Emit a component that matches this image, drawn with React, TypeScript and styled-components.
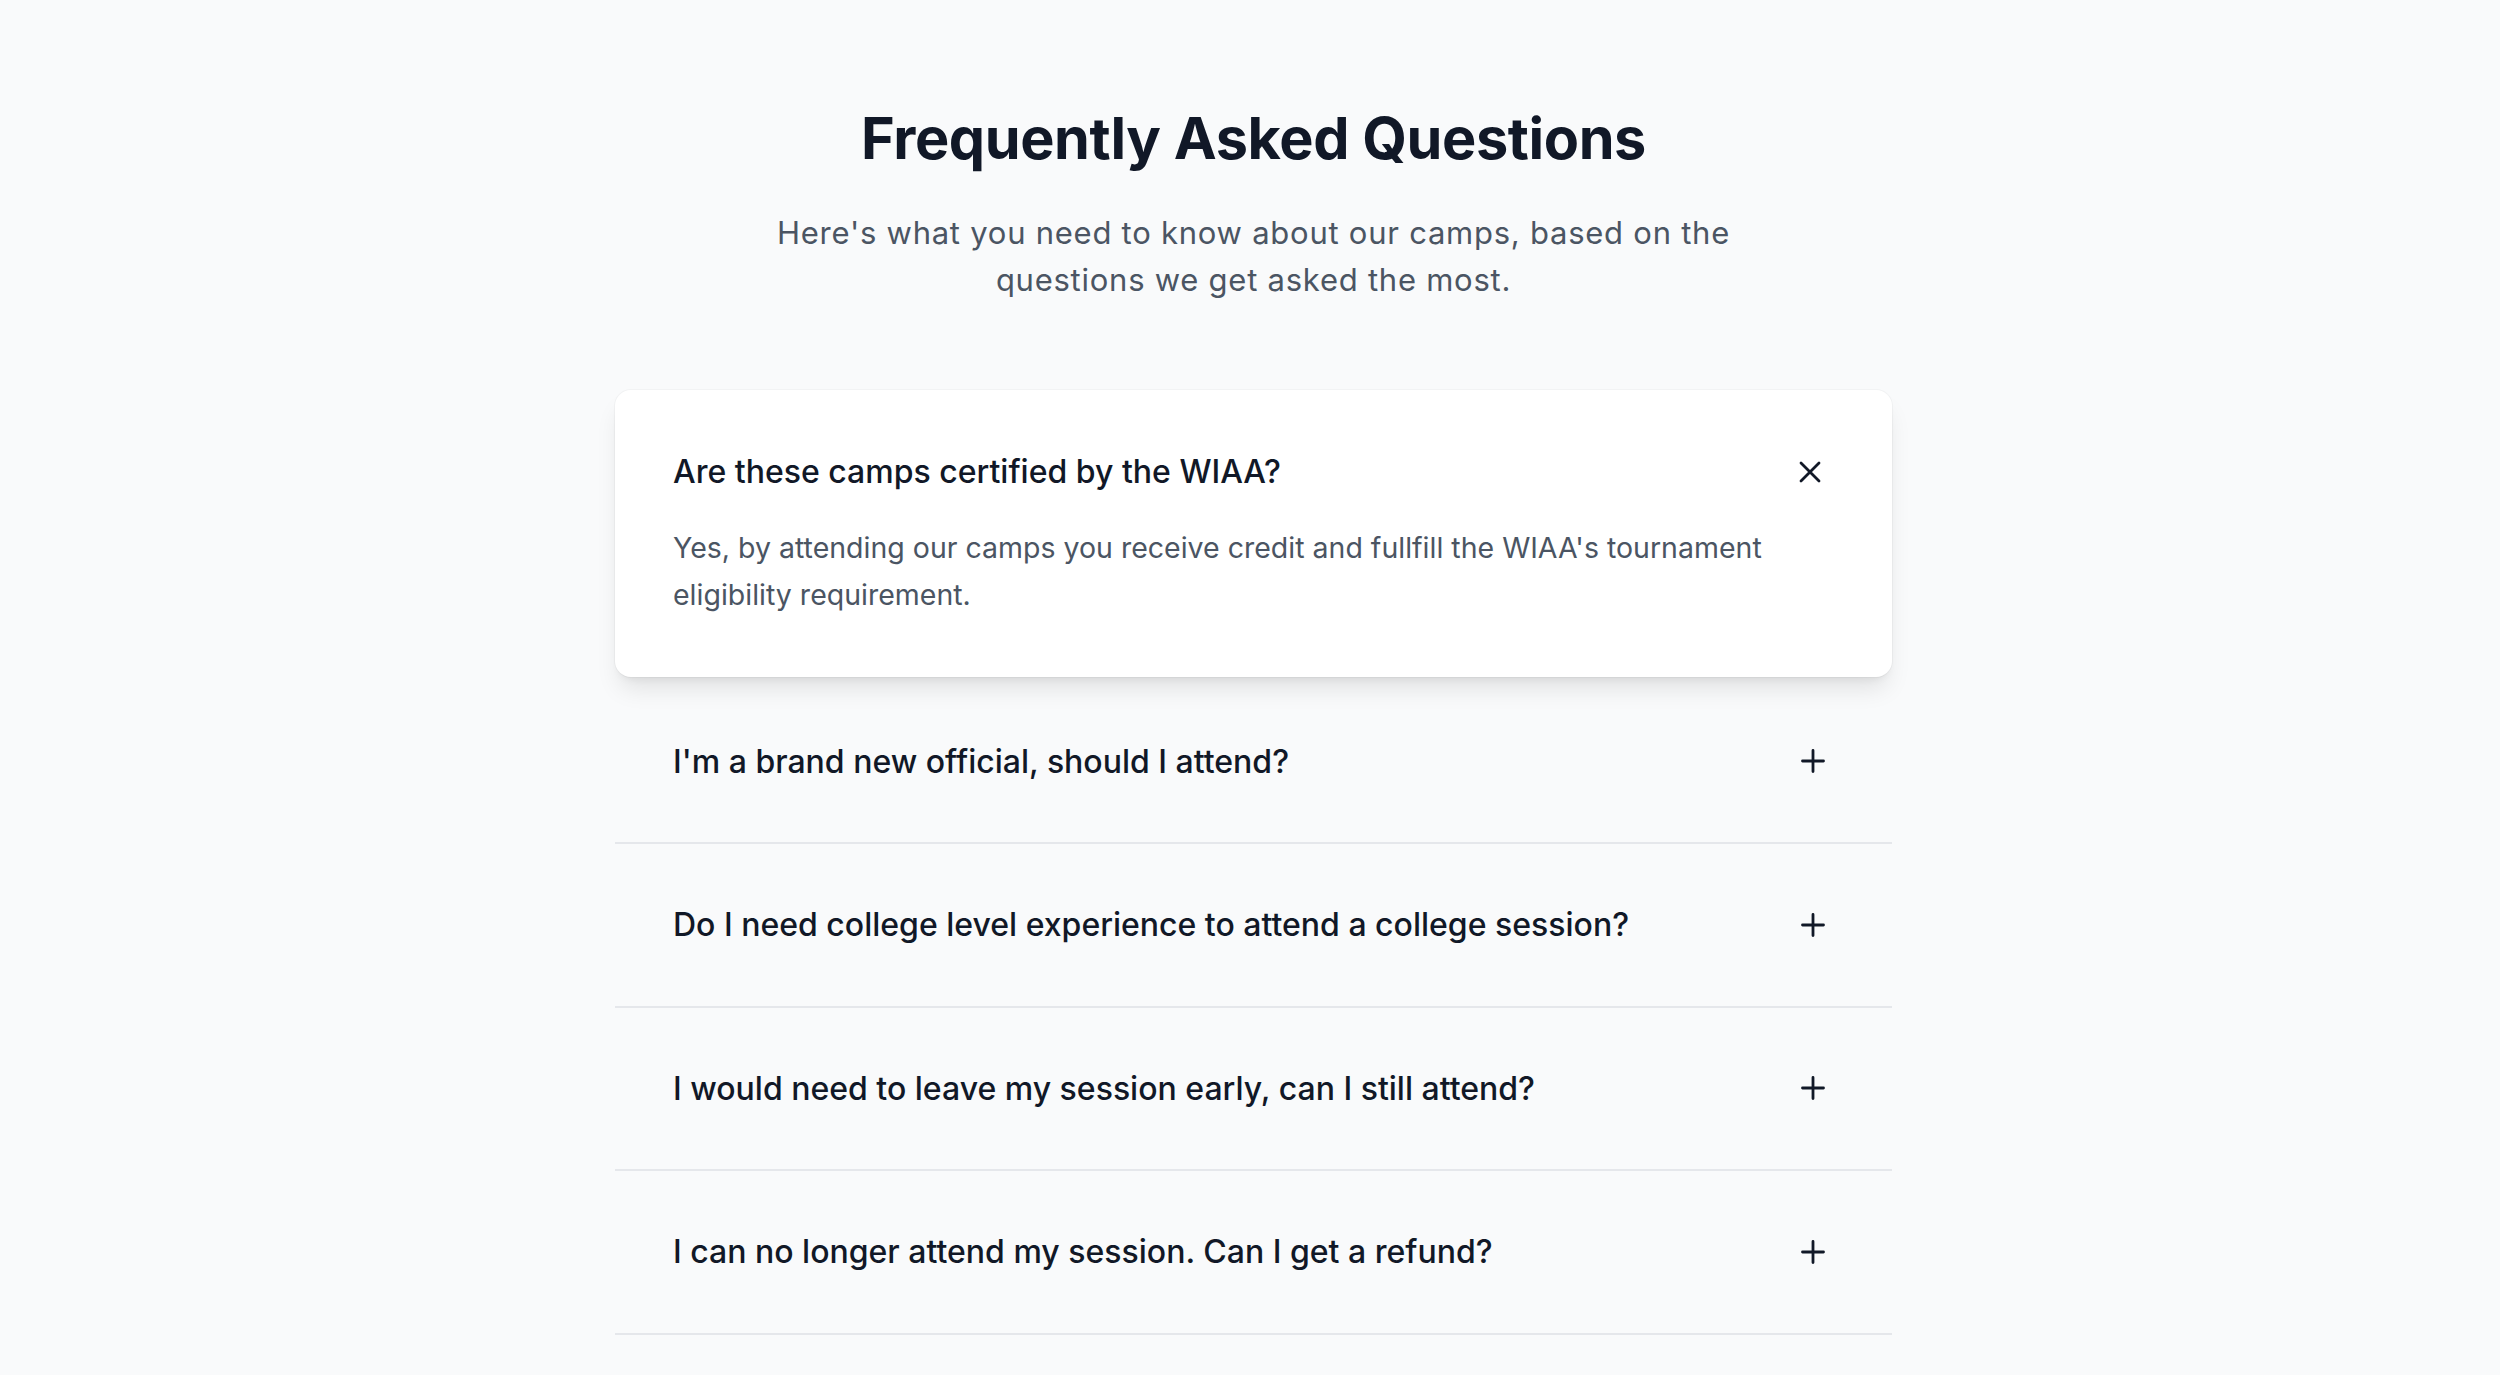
import React, { useState } from "react";
import styled, { createGlobalStyle } from "styled-components";

const GlobalStyle = createGlobalStyle`
  html, body {
    margin: 0;
    padding: 0;
    background: #f9fafb;
  }
  body {
    font-family: Inter, "Noto Sans", "Liberation Sans", sans-serif;
    -webkit-font-smoothing: antialiased;
  }
  * { box-sizing: border-box; }
`;

const Page = styled.main`
  min-height: 1375px;
  padding: 104px 0 80px 7px;
  display: flex;
  flex-direction: column;
  align-items: center;
`;

const Header = styled.header`
  display: flex;
  flex-direction: column;
  align-items: center;
  text-align: center;
  gap: 36px;
`;

const Title = styled.h1`
  margin: 0;
  font-size: 57.6px;
  line-height: 69px;
  font-weight: 700;
  color: #111827;
  letter-spacing: -0.4px;
`;

const Subtitle = styled.p`
  margin: 0;
  max-width: 1010px;
  font-size: 31px;
  line-height: 47px;
  font-weight: 400;
  letter-spacing: 0.75px;
  color: #4b5563;
`;

const List = styled.div`
  margin-top: 87px;
  width: 1277px;
  display: flex;
  flex-direction: column;
`;

const Item = styled.div<{ $open: boolean }>`
  padding: ${(p) => (p.$open ? "60px 63px 59.5px 58px" : "59px 63px 59px 58px")};
  margin-bottom: ${(p) => (p.$open ? "3.5px" : "0")};
  background: ${(p) => (p.$open ? "#ffffff" : "transparent")};
  border-radius: ${(p) => (p.$open ? "16px" : "0")};
  border-bottom: ${(p) => (p.$open ? "none" : "2px solid #e5e7eb")};
  box-shadow: ${(p) =>
    p.$open
      ? "0 0 0 1px rgba(17,24,39,0.03), 0 16px 24px -5px rgba(0,0,0,0.1), 0 6px 10px -6px rgba(0,0,0,0.1)"
      : "none"};
  display: flex;
  flex-direction: column;
  gap: 30px;
`;

const QuestionButton = styled.button`
  all: unset;
  cursor: pointer;
  display: flex;
  align-items: center;
  justify-content: space-between;
  gap: 24px;
  width: 100%;
`;

const Question = styled.span`
  font-family: Inter, "Noto Sans", "Liberation Sans", sans-serif;
  font-size: 32px;
  line-height: 43.5px;
  font-weight: 500;
  color: #111827;
`;

const Answer = styled.p`
  margin: 0;
  max-width: 1110px;
  font-size: 28.5px;
  line-height: 47px;
  color: #4b5563;
`;

const IconBox = styled.span`
  flex: none;
  width: 32px;
  height: 32px;
  display: flex;
  align-items: center;
  justify-content: center;
  color: #111827;
`;

const PlusIcon = () => (
  <svg width="32" height="32" viewBox="0 0 32 32" fill="none" stroke="currentColor" strokeWidth="2.8" strokeLinecap="round">
    <path d="M16 5.5v21M5.5 16h21" />
  </svg>
);

const CloseIcon = () => (
  <svg width="32" height="32" viewBox="0 0 32 32" fill="none" stroke="currentColor" strokeWidth="2.8" strokeLinecap="round">
    <path d="M4 7l18 18M22 7L4 25" />
  </svg>
);

const faqs = [
  {
    q: "Are these camps certified by the WIAA?",
    a: "Yes, by attending our camps you receive credit and fullfill the WIAA's tournament eligibility requirement.",
  },
  {
    q: "I'm a brand new official, should I attend?",
    a: "Absolutely. Our camps are designed for officials of every experience level, including those just starting out.",
  },
  {
    q: "Do I need college level experience to attend a college session?",
    a: "No. College sessions are open to any official looking to develop their skills at the next level.",
  },
  {
    q: "I would need to leave my session early, can I still attend?",
    a: "Please contact us before registering so we can discuss your schedule and credit requirements.",
  },
  {
    q: "I can no longer attend my session. Can I get a refund?",
    a: "Refunds are available up to two weeks before the start of your session.",
  },
];

export default function App() {
  const [open, setOpen] = useState<number | null>(0);
  return (
    <>
      <GlobalStyle />
      <Page>
        <Header>
          <Title>Frequently Asked Questions</Title>
          <Subtitle>
            Here's what you need to know about our camps, based on the questions we get asked the most.
          </Subtitle>
        </Header>
        <List>
          {faqs.map((f, i) => {
            const isOpen = open === i;
            return (
              <Item key={f.q} $open={isOpen}>
                <QuestionButton onClick={() => setOpen(isOpen ? null : i)}>
                  <Question>{f.q}</Question>
                  <IconBox>{isOpen ? <CloseIcon /> : <PlusIcon />}</IconBox>
                </QuestionButton>
                {isOpen && <Answer>{f.a}</Answer>}
              </Item>
            );
          })}
        </List>
      </Page>
    </>
  );
}
